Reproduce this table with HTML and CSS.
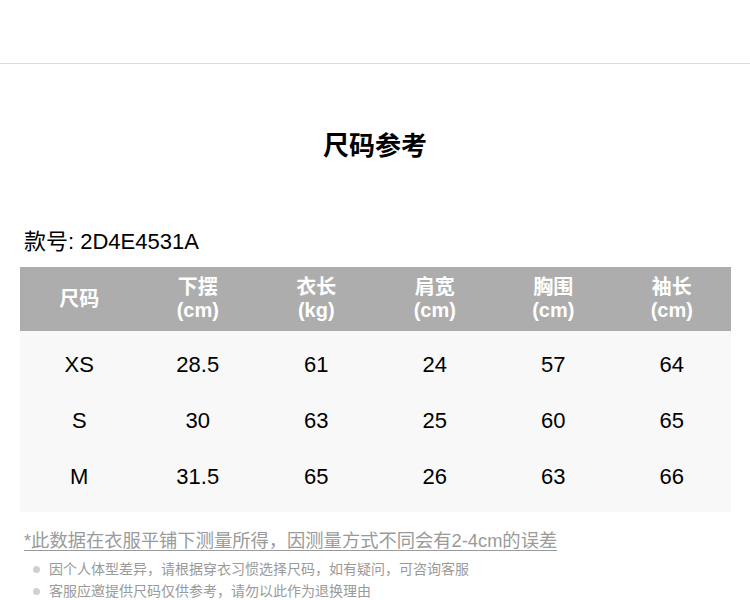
FILE: index.html
```html
<!DOCTYPE html>
<html lang="zh">
<head>
<meta charset="utf-8">
<link rel="stylesheet" href="styles.css">
</head>
<body>
<div class="topbar"></div>
<h1 class="title">尺码参考</h1>
<div class="sku">款号: 2D4E4531A</div>
<div class="table">
  <div class="thead">
    <div class="th">尺码</div>
    <div class="th">下摆<br>(cm)</div>
    <div class="th">衣长<br>(kg)</div>
    <div class="th">肩宽<br>(cm)</div>
    <div class="th">胸围<br>(cm)</div>
    <div class="th">袖长<br>(cm)</div>
  </div>
  <div class="tbody">
    <div class="tr"><div class="td">XS</div><div class="td">28.5</div><div class="td">61</div><div class="td">24</div><div class="td">57</div><div class="td">64</div></div>
    <div class="tr"><div class="td">S</div><div class="td">30</div><div class="td">63</div><div class="td">25</div><div class="td">60</div><div class="td">65</div></div>
    <div class="tr"><div class="td">M</div><div class="td">31.5</div><div class="td">65</div><div class="td">26</div><div class="td">63</div><div class="td">66</div></div>
  </div>
</div>
<p class="note">*此数据在衣服平铺下测量所得，因测量方式不同会有2-4cm的误差</p>
<ul class="tips">
  <li>因个人体型差异，请根据穿衣习惯选择尺码，如有疑问，可咨询客服</li>
  <li>客服应邀提供尺码仅供参考，请勿以此作为退换理由</li>
</ul>
</body>
</html>
```

FILE: styles.css
```css
* { box-sizing: border-box; }
body {
  margin: 0;
  background: #fff;
  font-family: "Liberation Sans", Arial, "Noto Sans CJK SC", sans-serif;
  color: #000;
}
.topbar {
  height: 64px;
  border-bottom: 1px solid #dcdcdc;
}
.title {
  margin: 66px 0 0;
  text-align: center;
  font-size: 26px;
  font-weight: bold;
  line-height: 32px;
  height: 32px;
}
.sku {
  margin: 66px 0 0 24px;
  font-size: 22px;
  line-height: 27px;
  height: 27px;
}
.table {
  margin: 12px 19px 0 20px;
}
.thead {
  display: grid;
  grid-template-columns: repeat(6, 1fr);
  background: #adadad;
  height: 64px;
  align-items: center;
}
.th {
  text-align: center;
  color: #fff;
  font-size: 20px;
  line-height: 23px;
  font-weight: bold;
}
.tbody {
  background: #f8f8f8;
  padding: 6px 0 7px;
}
.tr {
  display: grid;
  grid-template-columns: repeat(6, 1fr);
  height: 56px;
  align-items: center;
}
.td {
  text-align: center;
  font-size: 22px;
}
.note {
  margin: 16px 0 0 24px;
  font-size: 18.3px;
  line-height: 26px;
  color: #9a9a9a;
  text-decoration: underline;
  text-underline-offset: 3px;
}
.tips {
  list-style: none;
  margin: 4px 0 0 33px;
  padding: 0;
}
.tips li {
  display: flex;
  align-items: center;
  gap: 9px;
  font-size: 14px;
  line-height: 22px;
  color: #9a9a9a;
}
.tips li::before {
  content: "";
  width: 7px;
  height: 7px;
  border-radius: 50%;
  background: #d0d0d0;
  flex: none;
}
```
